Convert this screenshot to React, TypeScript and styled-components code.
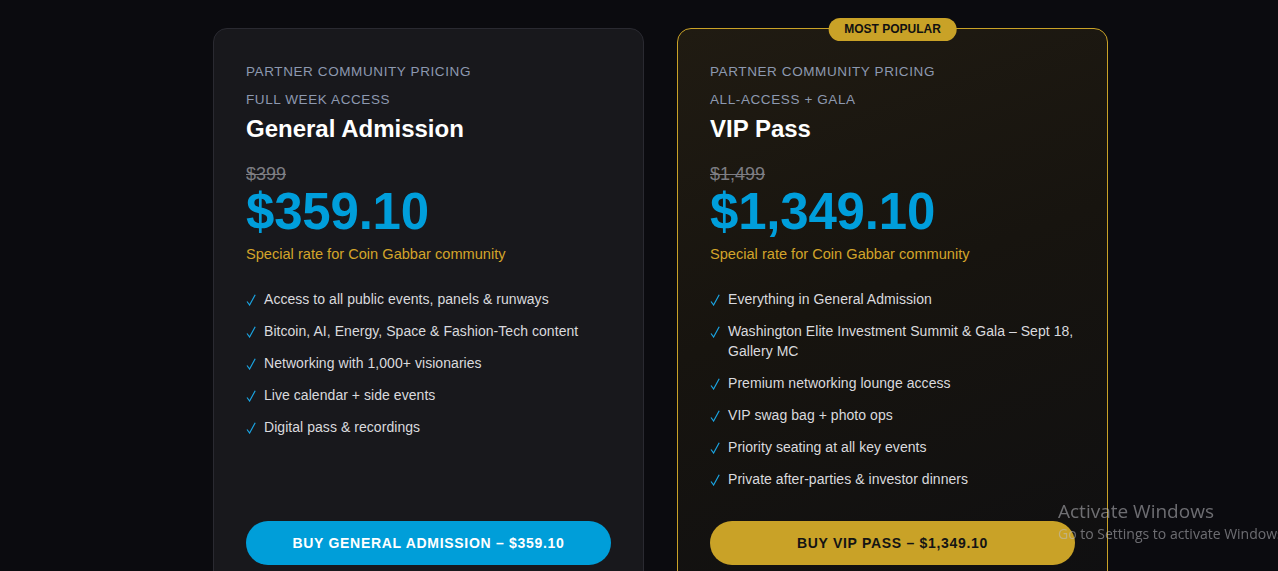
import styled, { createGlobalStyle, css } from "styled-components";

const GlobalStyle = createGlobalStyle`
  html, body {
    margin: 0;
    padding: 0;
    background: #0b0b0f;
    font-family: "Liberation Sans", Arial, sans-serif;
    overflow: hidden;
  }
`;

const Page = styled.div`
  width: 1278px;
  height: 571px;
  background: #0b0b0f;
  overflow: hidden;
`;

const Grid = styled.div`
  display: grid;
  grid-template-columns: 431px 431px;
  column-gap: 33px;
  margin-left: 213px;
  padding-top: 28px;
  align-items: stretch;
`;

const Card = styled.div<{ $featured?: boolean }>`
  position: relative;
  display: flex;
  flex-direction: column;
  box-sizing: border-box;
  padding: 33px 32px 40px 32px;
  border-radius: 14px;
  border: 1px solid #2a2a31;
  background: #18181c;

  ${(p) =>
    p.$featured &&
    css`
      border-color: #c9a227;
      background: linear-gradient(160deg, #201b12 0%, #17140f 45%, #0f0f11 100%);
    `}
`;

const Badge = styled.div`
  position: absolute;
  top: -11px;
  left: 50%;
  transform: translateX(-50%);
  height: 23px;
  padding: 0 16px;
  border-radius: 12px;
  background: #c9a227;
  color: #111;
  font-size: 12px;
  font-weight: 700;
  line-height: 23px;
  white-space: nowrap;
`;

const Eyebrow = styled.div`
  color: #8d99b0;
  font-size: 13.5px;
  letter-spacing: 0.6px;
  text-transform: uppercase;
  line-height: 20px;
  & + & {
    margin-top: 8px;
  }
`;

const Title = styled.h3`
  margin: 4px 0 0 0;
  color: #ffffff;
  font-size: 24px;
  font-weight: 700;
  line-height: 30px;
`;

const OldPrice = styled.div`
  margin-top: 19px;
  color: #7d7d83;
  font-size: 18px;
  line-height: 22px;
  text-decoration: line-through;
`;

const Price = styled.div`
  margin-top: -1px;
  color: #009edb;
  font-size: 51px;
  font-weight: 700;
  line-height: 56px;
  letter-spacing: -0.2px;
`;

const Note = styled.div`
  margin-top: 4px;
  color: #d3a42a;
  font-size: 14.6px;
  line-height: 20px;
`;

const Features = styled.ul`
  list-style: none;
  margin: 25px 0 0 0;
  padding: 0;
  display: flex;
  flex-direction: column;
  gap: 12px;
`;

const Feature = styled.li`
  display: flex;
  gap: 8px;
  color: #dadade;
  font-size: 14px;
  line-height: 20px;
  letter-spacing: 0.05px;
`;

const Check = styled.svg`
  flex: 0 0 10px;
  width: 10px;
  height: 12px;
  margin-top: 5px;
`;

const Button = styled.button<{ $gold?: boolean }>`
  margin-top: auto;
  height: 44px;
  width: 100%;
  border: none;
  border-radius: 22px;
  background: #009ed9;
  color: #ffffff;
  font-family: "Liberation Sans", Arial, sans-serif;
  font-size: 14px;
  font-weight: 700;
  letter-spacing: 0.7px;
  text-transform: uppercase;
  cursor: pointer;

  ${(p) =>
    p.$gold &&
    css`
      background: #c9a227;
      color: #141414;
    `}
`;

const Spacer = styled.div`
  flex: 1;
  min-height: 32px;
`;

const Watermark = styled.div`
  position: fixed;
  left: 1058px;
  top: 499px;
  color: rgba(190, 190, 195, 0.55);
  font-family: "Open Sans", "Noto Sans", sans-serif;
  white-space: nowrap;
  pointer-events: none;
`;

const WatermarkTitle = styled.div`
  font-size: 19px;
  line-height: 24px;
`;

const WatermarkSub = styled.div`
  font-size: 14px;
  line-height: 20px;
  margin-top: 1px;
`;

const plans = [
  {
    eyebrow: "Full Week Access",
    title: "General Admission",
    old: "$399",
    price: "$359.10",
    cta: "Buy General Admission – $359.10",
    featured: false,
    features: [
      "Access to all public events, panels & runways",
      "Bitcoin, AI, Energy, Space & Fashion-Tech content",
      "Networking with 1,000+ visionaries",
      "Live calendar + side events",
      "Digital pass & recordings",
    ],
  },
  {
    eyebrow: "All-Access + Gala",
    title: "VIP Pass",
    old: "$1,499",
    price: "$1,349.10",
    cta: "Buy VIP Pass – $1,349.10",
    featured: true,
    features: [
      "Everything in General Admission",
      "Washington Elite Investment Summit & Gala – Sept 18, Gallery MC",
      "Premium networking lounge access",
      "VIP swag bag + photo ops",
      "Priority seating at all key events",
      "Private after-parties & investor dinners",
    ],
  },
];

export default function App() {
  return (
    <Page>
      <GlobalStyle />
      <Grid>
        {plans.map((plan, i) => (
          <Card key={i} $featured={plan.featured}>
            {plan.featured && <Badge>MOST POPULAR</Badge>}
            <Eyebrow>Partner Community Pricing</Eyebrow>
            <Eyebrow>{plan.eyebrow}</Eyebrow>
            <Title>{plan.title}</Title>
            <OldPrice>{plan.old}</OldPrice>
            <Price>{plan.price}</Price>
            <Note>Special rate for Coin Gabbar community</Note>
            <Features>
              {plan.features.map((f, j) => (
                <Feature key={j}>
                  <Check viewBox="0 0 10 12">
                    <polyline
                      points="1,7.5 3.6,11 9.2,0.8"
                      fill="none"
                      stroke="#1aa3e0"
                      strokeWidth="1.2"
                    />
                  </Check>
                  <span>{f}</span>
                </Feature>
              ))}
            </Features>
            <Spacer />
            <Button $gold={plan.featured}>{plan.cta}</Button>
          </Card>
        ))}
      </Grid>
      <Watermark>
        <WatermarkTitle>Activate Windows</WatermarkTitle>
        <WatermarkSub>Go to Settings to activate Windows.</WatermarkSub>
      </Watermark>
    </Page>
  );
}
